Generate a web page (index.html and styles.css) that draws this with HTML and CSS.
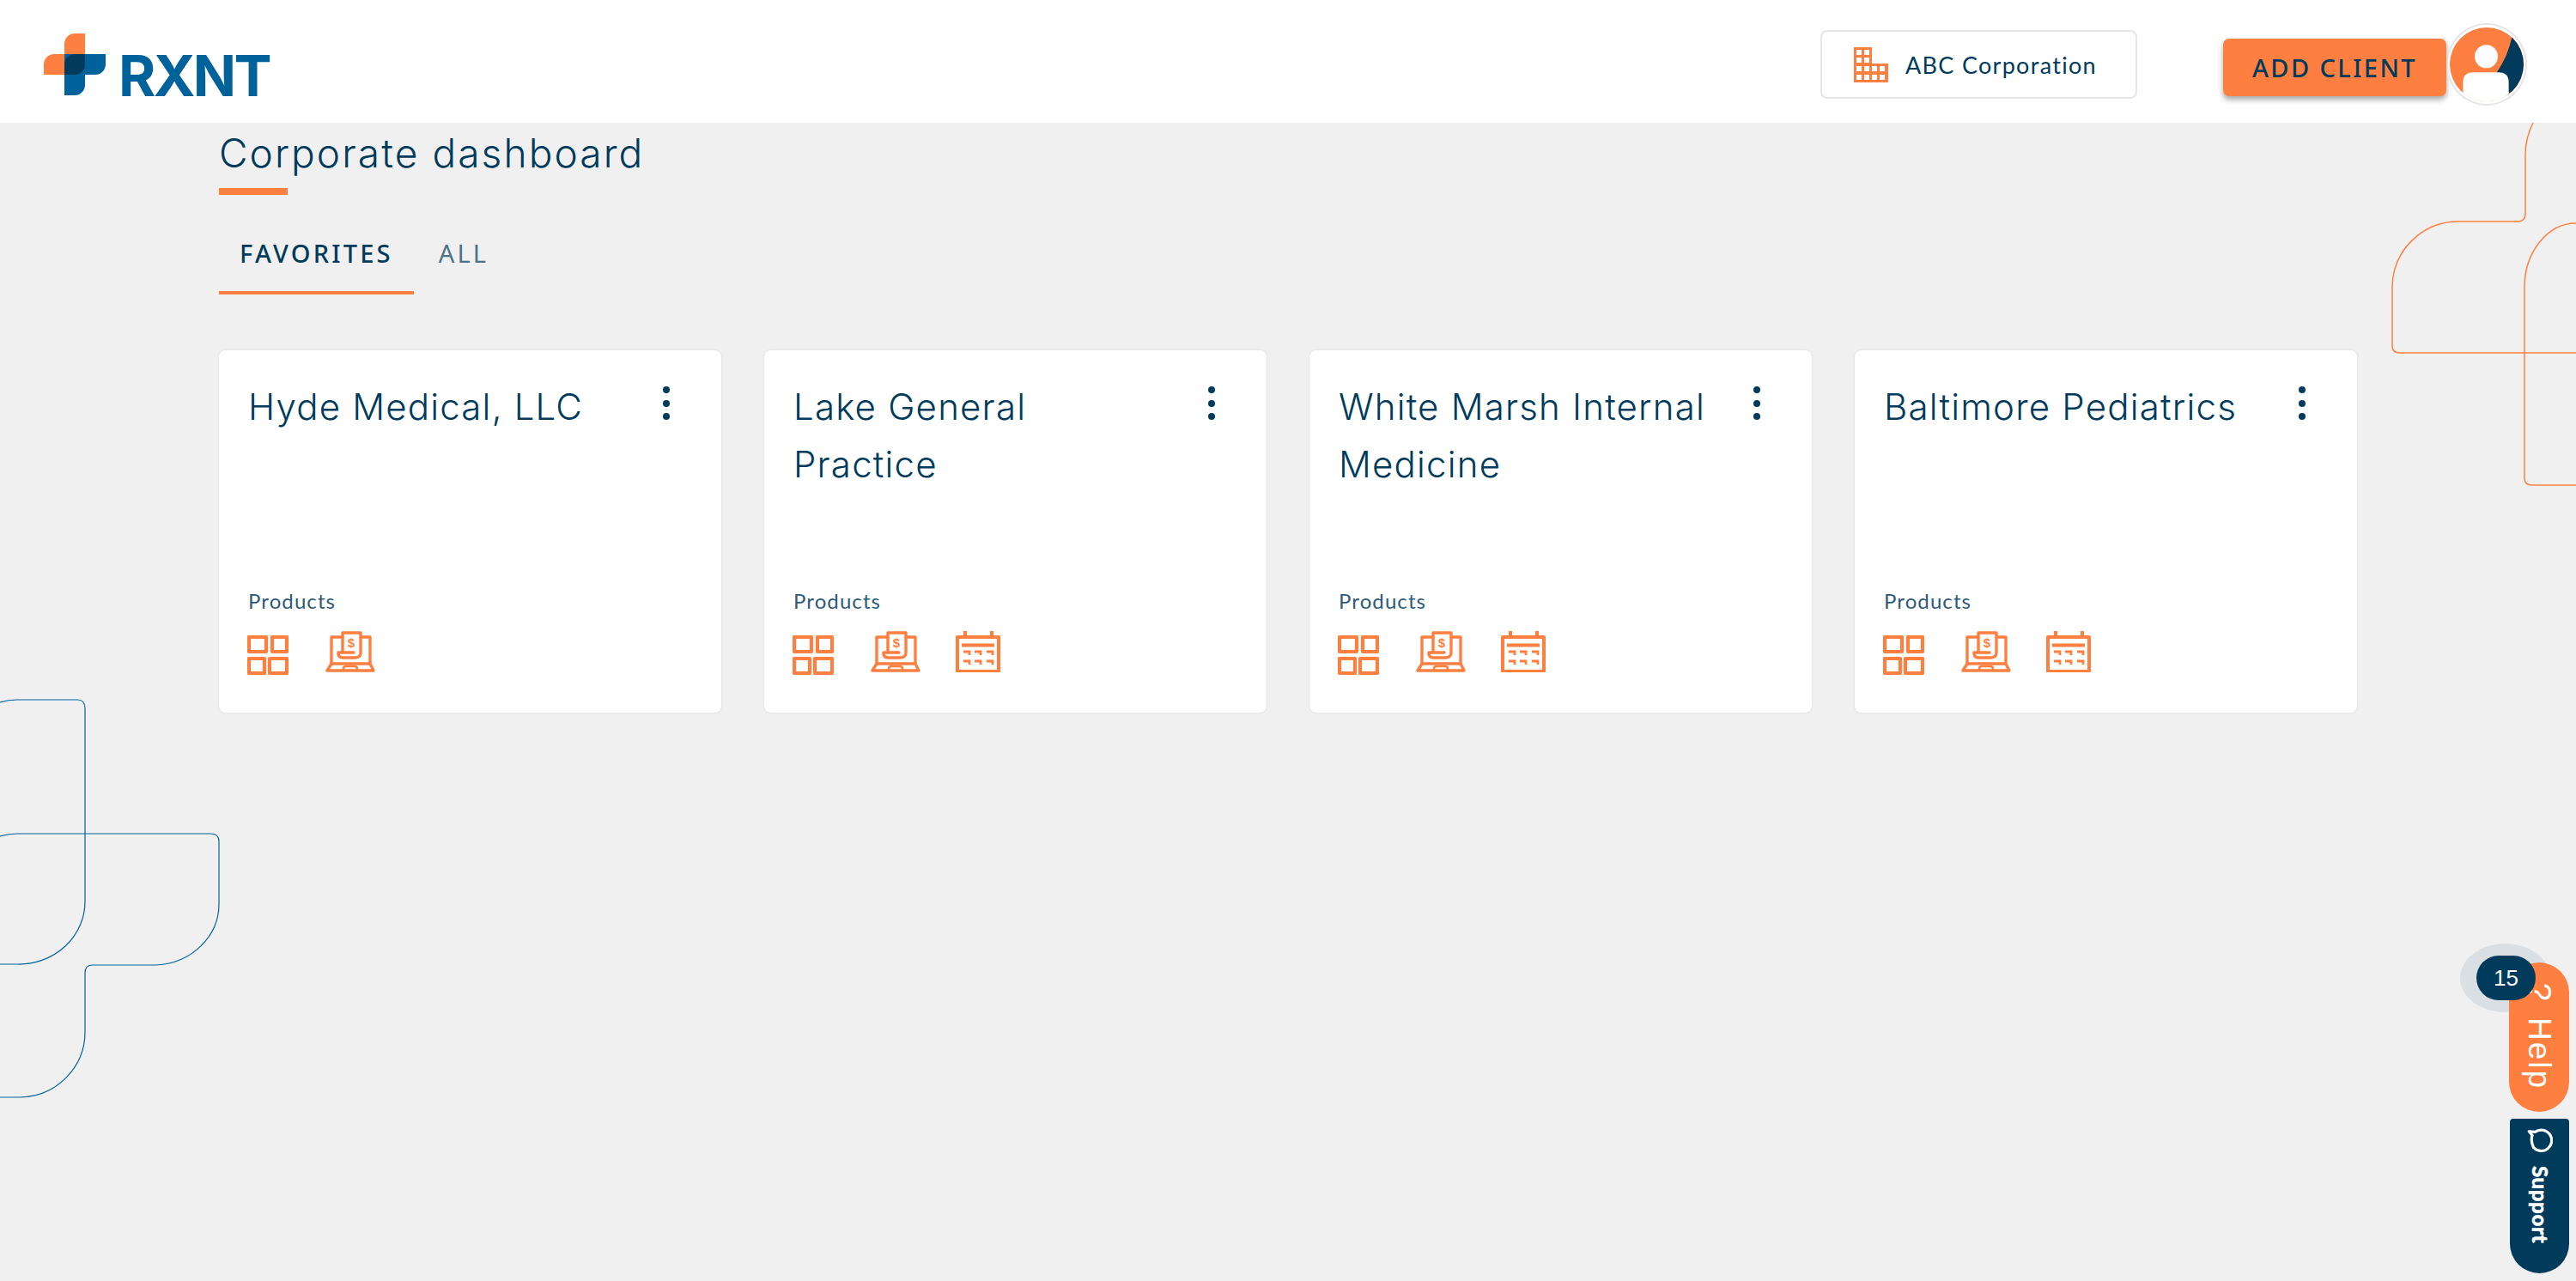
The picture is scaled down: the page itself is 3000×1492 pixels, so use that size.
FILE: index.html
```html
<!DOCTYPE html>
<html lang="en">
<head>
<meta charset="utf-8">
<title>Corporate dashboard</title>
<link rel="stylesheet" href="styles.css">
</head>
<body>
<svg class="defs" width="0" height="0" aria-hidden="true">
  <symbol id="i-grid" viewBox="0 0 48 46">
    <g fill="none" stroke="#ff7f41" stroke-width="4.200" stroke-linejoin="round">
      <rect x="2" y="2" width="20" height="17"/><rect x="29" y="2" width="17" height="17"/>
      <rect x="2" y="27" width="18" height="17"/><rect x="26" y="27" width="20" height="17"/>
    </g>
  </symbol>
  <symbol id="i-laptop" viewBox="0 0 58 50">
    <g fill="none" stroke="#ff7f41" stroke-width="3.400" stroke-linejoin="round" stroke-linecap="round">
      <path d="M7 38V7H20M41 7H52V38"/>
      <path d="M20 25V2H41V25Q41 31 34 31H20Q15 31 15 26V25H33"/>
      <path d="M7 38L2 46H56L52 38Z"/>
    </g>
    <path fill="none" stroke="#ff7f41" stroke-width="2.600" d="M21 46V44Q21 41 24 41H34Q37 41 37 44V46"/>
  </symbol>
  <symbol id="i-cal" viewBox="0 0 52 48">
    <g fill="none" stroke="#ff7f41" stroke-width="4" stroke-linejoin="round">
      <rect x="2" y="7" width="48" height="40"/>
      <path d="M11 0V7M42 0V7M7 16.500H45"/>
    </g>
    <g fill="none" stroke="#ff7f41" stroke-width="2.800">
      <path d="M9 24H16V28M22 24H29V28M36 24H43V28M9 35H16V39M22 35H29V39M36 35H43V39"/>
    </g>
  </symbol>
</svg>

<svg class="decor decor-right" viewBox="0 0 214 425" aria-hidden="true">
  <path d="M164 0Q155 18 155 37V105Q155 115 146 115H77A77 77 0 0 0 0 190V260Q0 268 9 268H214"/>
  <path d="M214 117A60 75 0 0 0 154 192V414Q154 422 163 422H214"/>
</svg>
<svg class="decor decor-left" viewBox="0 0 256 465" aria-hidden="true">
  <path d="M0 3Q10 0 20 0H90Q99 0 99 10V235A77 73 0 0 1 20 308H0"/>
  <path d="M0 159Q10 156 20 156H245Q255 156 255 165V238A77 71 0 0 1 182 309H108Q99 309 99 318V387A77 76 0 0 1 23 463H0"/>
</svg>

<header class="topbar">
  <div class="brand">
    <svg class="brand-mark" viewBox="0 0 72 72" aria-hidden="true">
      <path fill="#ff7f41" d="M24 0H48V48H0V36A12 12 0 0 1 12 24H24V12A12 12 0 0 1 36 0Z"/>
      <path fill="#00629b" d="M24 24H72V36A12 12 0 0 1 60 48H48V60A12 12 0 0 1 36 72H24Z"/>
      <path fill="#003b5c" d="M36 24H48V36A12 12 0 0 1 36 48H24V36A12 12 0 0 1 36 24Z"/>
    </svg>
    <span class="brand-name">RXNT</span>
  </div>
  <div class="topbar-right">
    <div class="org">
      <svg class="org-icon" viewBox="0 0 40 41" aria-hidden="true">
        <path class="org-fill" d="M0 0H21V19H40V41H0Z"/>
        <g class="org-win">
          <rect x="3" y="3" width="6" height="6"/><rect x="12" y="3" width="6" height="6"/>
          <rect x="3" y="12" width="6" height="6"/><rect x="12" y="12" width="6" height="6"/>
          <rect x="3" y="22" width="6" height="6"/><rect x="12" y="22" width="6" height="6"/><rect x="21" y="22" width="6" height="6"/><rect x="30" y="22" width="6" height="6"/>
          <rect x="3" y="32" width="6" height="6"/><rect x="12" y="32" width="6" height="6"/><rect x="21" y="32" width="6" height="6"/><rect x="30" y="32" width="6" height="6"/>
        </g>
      </svg>
      <span>ABC Corporation</span>
    </div>
    <button class="add-client" type="button">ADD CLIENT</button>
    <div class="avatar">
      <svg viewBox="0 0 89 91" aria-hidden="true">
        <defs><clipPath id="avatar-clip"><circle cx="44.500" cy="45.500" r="44.500"/></clipPath></defs>
        <g clip-path="url(#avatar-clip)">
          <rect width="89" height="91" fill="#ff7f41"/>
          <path fill="#003b5c" d="M75 12Q70 36 56 56L71 91H89V12Z"/>
          <circle cx="44" cy="36" r="14" fill="#fff"/>
          <path fill="#fff" d="M16 91V67Q16 55 28 55H59Q71 55 71 67V91Z"/>
          <rect y="80" width="89" height="11" fill="#fff"/>
        </g>
      </svg>
    </div>
  </div>
</header>

<main class="content">
  <h1 class="page-title">Corporate dashboard</h1>
  <nav class="tabs">
    <a class="tab tab-active">FAVORITES</a>
    <a class="tab">ALL</a>
  </nav>
  <section class="cards">
    <article class="card">
      <div class="card-head">
        <h2 class="card-title">Hyde Medical, LLC</h2>
        <div class="kebab"><i></i><i></i><i></i></div>
      </div>
      <div class="card-foot">
        <div class="products-label">Products</div>
        <div class="products">
          <svg class="p-grid"><use href="#i-grid"/></svg>
          <svg class="p-laptop" viewBox="0 0 58 50"><use href="#i-laptop"/><text x="30" y="19" class="dollar">$</text></svg>
        </div>
      </div>
    </article>
    <article class="card">
      <div class="card-head">
        <h2 class="card-title">Lake General Practice</h2>
        <div class="kebab"><i></i><i></i><i></i></div>
      </div>
      <div class="card-foot">
        <div class="products-label">Products</div>
        <div class="products">
          <svg class="p-grid"><use href="#i-grid"/></svg>
          <svg class="p-laptop" viewBox="0 0 58 50"><use href="#i-laptop"/><text x="30" y="19" class="dollar">$</text></svg>
          <svg class="p-cal"><use href="#i-cal"/></svg>
        </div>
      </div>
    </article>
    <article class="card">
      <div class="card-head">
        <h2 class="card-title">White Marsh Internal Medicine</h2>
        <div class="kebab"><i></i><i></i><i></i></div>
      </div>
      <div class="card-foot">
        <div class="products-label">Products</div>
        <div class="products">
          <svg class="p-grid"><use href="#i-grid"/></svg>
          <svg class="p-laptop" viewBox="0 0 58 50"><use href="#i-laptop"/><text x="30" y="19" class="dollar">$</text></svg>
          <svg class="p-cal"><use href="#i-cal"/></svg>
        </div>
      </div>
    </article>
    <article class="card">
      <div class="card-head">
        <h2 class="card-title">Baltimore Pediatrics</h2>
        <div class="kebab"><i></i><i></i><i></i></div>
      </div>
      <div class="card-foot">
        <div class="products-label">Products</div>
        <div class="products">
          <svg class="p-grid"><use href="#i-grid"/></svg>
          <svg class="p-laptop" viewBox="0 0 58 50"><use href="#i-laptop"/><text x="30" y="19" class="dollar">$</text></svg>
          <svg class="p-cal"><use href="#i-cal"/></svg>
        </div>
      </div>
    </article>
  </section>
</main>

<div class="halo"></div>
<div class="help"><span class="help-q">?</span><span>Help</span></div>
<div class="badge">15</div>
<div class="support">
  <svg class="support-icon" viewBox="0 0 32 32" aria-hidden="true">
    <path fill="none" stroke="#fff" stroke-width="3.400" stroke-linecap="round" stroke-linejoin="round" d="M2.500 4L10 4.700A13 13 0 1 1 8 24Q4 15 6.500 9Z"/>
  </svg>
  <span class="support-text">Support</span>
</div>
</body>
</html>
```
FILE: styles.css
```css
* { box-sizing: border-box; }
html, body { margin: 0; height: 100%; }
body {
  position: relative;
  width: 3000px;
  height: 1492px;
  overflow: hidden;
  background: #f0f0f0;
  color: #003b5c;
  font-family: Inter, "Liberation Sans", sans-serif;
}
.defs { position: absolute; }

.decor { position: absolute; fill: none; stroke-width: 1.5; overflow: visible; }
.decor-right { left: 2786px; top: 143px; width: 214px; height: 425px; stroke: #ff7f41; }
.decor-left { left: 0; top: 815px; width: 256px; height: 465px; stroke: #00629b; stroke-width: 1.2; }

.topbar {
  position: relative;
  height: 143px;
  background: #fff;
  display: flex;
  align-items: flex-start;
  justify-content: space-between;
}
.brand { display: flex; align-items: flex-start; padding: 39px 0 0 51px; }
.brand-mark { width: 72px; height: 72px; }
.brand-name {
  margin: 16px 0 0 15px;
  font: 700 66px/1 Inter, sans-serif;
  letter-spacing: -2.6px;
  color: #00629b;
}
.topbar-right { display: flex; align-items: flex-start; padding-right: 57px; }
.org {
  width: 369px;
  height: 80px;
  margin-top: 35px;
  margin-right: 100px;
  padding-left: 37px;
  display: flex;
  align-items: center;
  gap: 20px;
  background: #fff;
  border: 2px solid #e6e6e6;
  border-radius: 8px;
  font: 400 27px/1 Lato, sans-serif;
  letter-spacing: 1.3px;
}
.org-icon { width: 40px; height: 41px; flex: none; }
.org-fill { fill: #ff7f41; }
.org-win { fill: #fff; }
.add-client {
  width: 260px;
  height: 67px;
  margin-top: 45px;
  border: 0;
  border-radius: 7px;
  background: #ff7f41;
  color: #003b5c;
  box-shadow: 0 4px 6px rgba(0, 0, 0, .35);
  font: 500 29px/1 "Noto Sans", sans-serif;
  letter-spacing: 2.4px;
}
.avatar {
  width: 94px;
  height: 96px;
  margin-top: 27px;
  padding: 2px;
  border: 2px solid #e6e6e6;
  border-radius: 50%;
  background: #fff;
}
.avatar svg { display: block; width: 100%; height: 100%; }

.content { position: relative; padding: 0 0 0 255px; }
.page-title {
  width: fit-content;
  margin: 0;
  padding-top: 3px;
  height: 84px;
  font: 300 46px/64px Inter, sans-serif;
  letter-spacing: 2.1px;
  position: relative;
}
.page-title::after {
  content: "";
  position: absolute;
  left: 0;
  bottom: 0;
  width: 80px;
  height: 8px;
  background: #ff7f41;
}
.tabs { display: flex; margin-top: 0; height: 116px; }
.tab {
  height: 116px;
  padding: 51px 24px 0;
  font: 400 29px/1.15 "Noto Sans", sans-serif;
  letter-spacing: 3.200px;
  color: #4b7089;
}
.tab + .tab { padding-left: 29px; }
.tab-active { color: #003b5c; border-bottom: 4px solid #ff7f41; font-weight: 500; }

.cards { display: flex; gap: 50px; margin-top: 65px; }
.card {
  width: 585px;
  height: 422px;
  padding: 32px 34px 34px;
  display: flex;
  flex-direction: column;
  justify-content: space-between;
  background: #fff;
  border-radius: 8px;
  box-shadow: 0 0 0 1.5px #e8e8e8;
}
.card-head { display: flex; justify-content: space-between; }
.card-title {
  width: 446px;
  margin: 0;
  font: 300 42px/67px Inter, sans-serif;
  letter-spacing: 1.2px;
}
.kebab { display: flex; flex-direction: column; gap: 7.500px; width: 8px; margin: 10px 26px 0 0; }
.kebab i { width: 8px; height: 8px; border-radius: 50%; background: #003b5c; }
.card-foot { padding-bottom: 11px; }
.products-label { margin-bottom: 20px; font: 400 24px/30px Lato, sans-serif; letter-spacing: 1.1px; color: #2d5a78; }
.products { display: flex; align-items: flex-start; height: 50px; margin-left: -1px; }
.products svg { display: block; flex: none; }
.p-grid { width: 48px; height: 46px; margin: 5px 43px 0 0; }
.p-laptop { width: 58px; height: 50px; margin-right: 41px; }
.p-cal { width: 52px; height: 48px; }
.dollar { font: 700 15px "Liberation Sans", sans-serif; fill: #ff7f41; text-anchor: middle; }

.halo {
  position: absolute;
  left: 2865px;
  top: 1099px;
  width: 105px;
  height: 80px;
  border-radius: 50%;
  background: #d9dfe3;
}
.help {
  position: absolute;
  left: 2922px;
  top: 1121px;
  width: 70px;
  height: 174px;
  padding-top: 24px;
  display: flex;
  align-items: center;
  gap: 17px;
  writing-mode: vertical-rl;
  background: #ff7f41;
  border-radius: 35px;
  color: #fff;
  font: 400 37px/70px "Liberation Sans", sans-serif;
  letter-spacing: 2px;
}
.badge {
  position: absolute;
  left: 2884px;
  top: 1113px;
  width: 69px;
  height: 52px;
  border-radius: 26px;
  background: #003b5c;
  color: #fff;
  text-align: center;
  font: 400 26px/52px "Liberation Sans", sans-serif;
}
.support {
  position: absolute;
  left: 2923px;
  top: 1303px;
  width: 69px;
  height: 180px;
  display: flex;
  flex-direction: column;
  align-items: center;
  padding-top: 11px;
  background: #003b5c;
  border-radius: 4px 4px 35px 35px;
  color: #fff;
}
.support-icon { width: 30px; height: 30px; flex: none; }
.support-text {
  margin-top: 14px;
  writing-mode: vertical-rl;
  font: 900 24px/1 Lato, sans-serif;
  letter-spacing: .6px;
  -webkit-text-stroke: .5px #fff;
}
```
